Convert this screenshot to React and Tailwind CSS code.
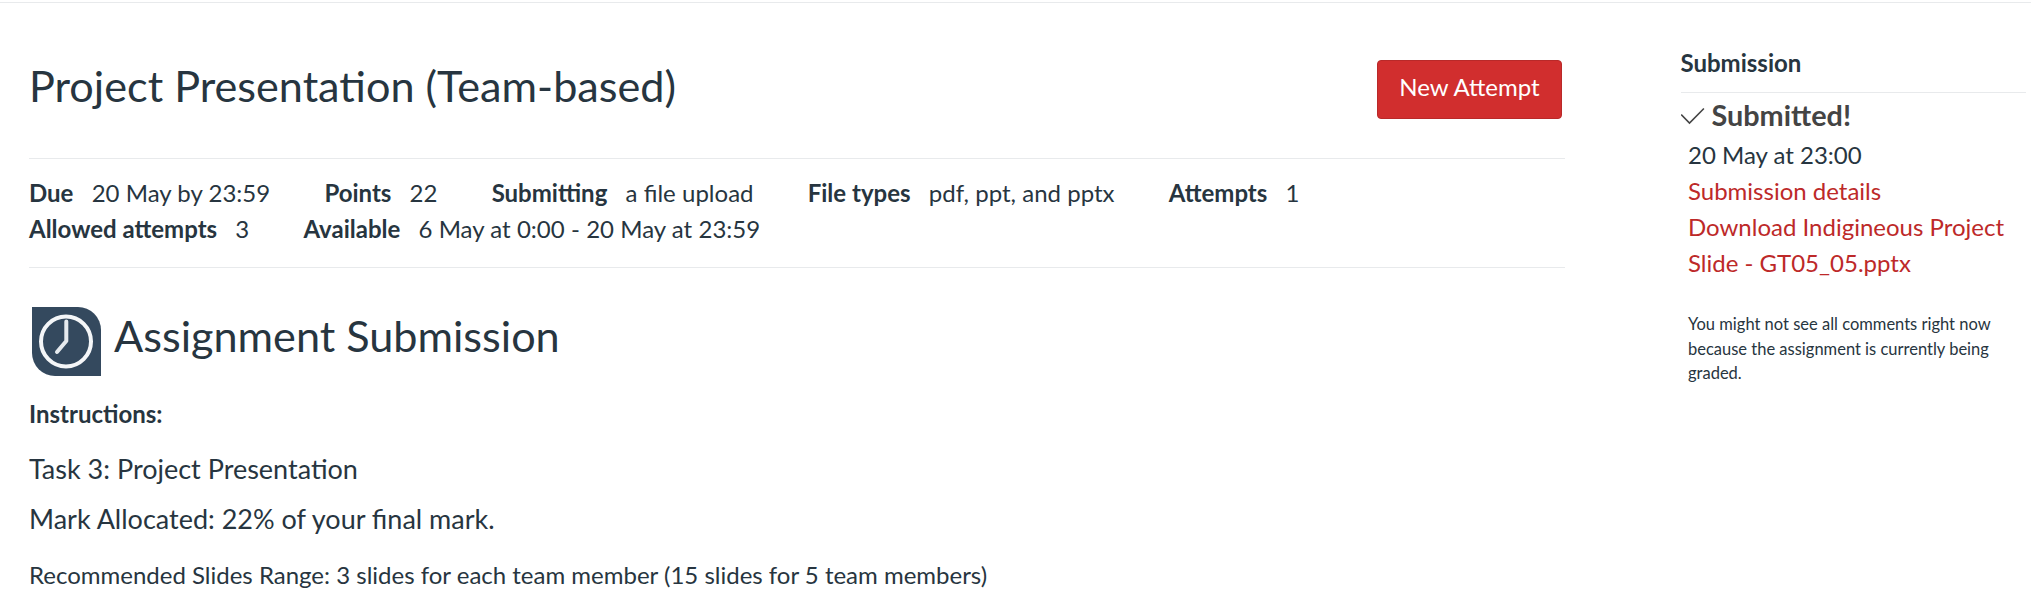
import React from "react";

const details = [
  ["Due", "20 May by 23:59"],
  ["Points", "22"],
  ["Submitting", "a file upload"],
  ["File types", "pdf, ppt, and pptx"],
  ["Attempts", "1"],
  ["Allowed attempts", "3"],
  ["Available", "6 May at 0:00 - 20 May at 23:59"],
];

function ClockBadge() {
  return (
    <svg className="mt-[4px] ml-[3px] block h-[69px] w-[69px] shrink-0" viewBox="0 0 69 69" fill="none">
      <path d="M0 0H46A23 23 0 0 1 69 23V69H23A23 23 0 0 1 0 46Z" fill="#34495e" />
      <circle cx="34" cy="34.5" r="25" stroke="#f4f6f8" strokeWidth="4" />
      <path d="M34.3 14.5V34L25 45" stroke="#e6eaee" strokeWidth="4" strokeLinecap="round" strokeLinejoin="round" />
    </svg>
  );
}

export default function App() {
  return (
    <div className="h-[609px] w-[2031px] overflow-hidden bg-white font-['Lato',sans-serif] text-[24px] leading-[36px] text-[#273540]">
      <div className="mt-[2px] flex border-t border-[#e8eaec]">
        <main className="ml-[29px] w-[1536px]">
          <header className="flex h-[155px] items-start justify-between">
            <h1 className="mt-[50px] text-[43.2px] leading-[64px]">Project Presentation (Team-based)</h1>
            <button className="mt-[57px] mr-[3px] h-[59px] w-[185px] rounded-[4px] border border-[#b92929] bg-[#d12e2e] pb-[5px] text-white">
              New Attempt
            </button>
          </header>
          <ul className="flex h-[110px] flex-wrap content-start gap-x-[54.2px] border-y border-[#e8eaec] pt-[16px]">
            {details.map(([label, value]) => (
              <li key={label} className="flex gap-[18.2px]">
                <span className="font-bold">{label}</span>
                <span className="[word-spacing:0.12px]">{value}</span>
              </li>
            ))}
          </ul>
          <section>
            <div className="mt-[35px] flex">
              <ClockBadge />
              <h2 className="ml-[13px] text-[43.2px] leading-[64px]">Assignment Submission</h2>
            </div>
            <p className="mt-[20px] font-bold">Instructions:</p>
            <p className="mt-[16px] text-[27px] leading-[42px]">Task 3: Project Presentation</p>
            <p className="mt-[8px] text-[27px] leading-[42px]">Mark Allocated: 22% of your final mark.</p>
            <p className="mt-[17px]">Recommended Slides Range: 3 slides for each team member (15 slides for 5 team members)</p>
          </section>
        </main>
        <aside className="ml-[115.5px] w-[345.5px] pt-[42px]">
          <h2 className="border-b border-[#e8eaec] pb-[11px] font-bold">Submission</h2>
          <div className="mt-[4px] flex items-center text-[#444444]">
            <svg className="h-[24px] w-[24px]" viewBox="0 0 24 24" fill="none" stroke="#444444" strokeWidth="1.6">
              <path d="M0.2 11.5L8.5 20L22.9 5.5" />
            </svg>
            <span className="ml-[7px] text-[28.8px] font-bold">Submitted!</span>
          </div>
          <div className="mt-[4px] pl-[7.5px]">
            <p>20 May at 23:00</p>
            <p className="text-[#bd2929]">Submission details</p>
            <p className="text-[#bd2929]">
              Download Indigineous Project
              <br />
              Slide - GT05_05.pptx
            </p>
            <p className="mt-[31px] text-[16.5px] leading-[24.5px]">
              You might not see all comments right now
              <br />
              because the assignment is currently being
              <br />
              graded.
            </p>
          </div>
        </aside>
      </div>
    </div>
  );
}
